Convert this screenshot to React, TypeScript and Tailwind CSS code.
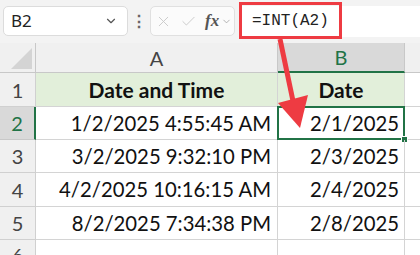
import { Check, ChevronDown, X } from 'lucide-react'

const rows = [
  { n: 2, a: '1/2/2025 4:55:45 AM', b: '2/1/2025', h: 'h-[33px]' },
  { n: 3, a: '3/2/2025 9:32:10 PM', b: '2/3/2025', h: 'h-[33px]' },
  { n: 4, a: '4/2/2025 10:16:15 AM', b: '2/4/2025', h: 'h-[34px]' },
  { n: 5, a: '8/2/2025 7:34:38 PM', b: '2/8/2025', h: 'h-[33px]' },
]

const font = "font-['Lato','Liberation_Sans',sans-serif]"

export default function App() {
  return (
    <div className={`relative h-[255px] w-[420px] overflow-hidden bg-white ${font}`}>
      {/* formula bar */}
      <div className="flex h-[43px] items-start bg-[#f3f3f3] pt-[6px]">
        <div className="ml-[3px] flex h-[30px] w-[125px] items-center justify-between rounded-[5px] border border-[#dcdcdc] bg-white px-[7px]">
          <span className="font-['Noto_Sans',sans-serif] text-[17px] text-[#222]">B2</span>
          <ChevronDown className="mr-[2px] h-[14px] w-[14px] text-[#555]" strokeWidth={2} />
        </div>
        <div className="flex h-[30px] w-[22px] items-center justify-center text-[16px] font-bold text-[#666]">⋮</div>
        <div className="flex h-[30px] w-[85px] items-center gap-[8px] rounded-[5px] border border-[#e0e0e0] bg-[#fbfbfb] pl-[4px]">
          <X className="h-[17px] w-[17px] text-[#c8c8c8]" strokeWidth={1.3} />
          <Check className="h-[17px] w-[17px] text-[#c8c8c8]" strokeWidth={1.3} />
          <span className="flex items-center">
            <span className="font-['Liberation_Serif',serif] text-[17px] font-bold italic text-[#555]">fx</span>
            <ChevronDown className="ml-[2px] h-[11px] w-[11px] text-[#999]" strokeWidth={1.6} />
          </span>
        </div>
        <div className="ml-[4px] flex h-[31px] flex-1 items-center bg-white">
          <div className="-mt-[2px] flex h-[37px] w-[103px] items-center border-[3px] border-[#ee3b42] pl-[10px]">
            <span className="font-['Liberation_Mono',monospace] text-[16px] text-[#222]">=INT(A2)</span>
          </div>
        </div>
      </div>

      {/* sheet */}
      <div className="grid grid-cols-[36px_242px_127px_1fr] text-[#111]">
        {/* column header */}
        <div className="flex h-[30px] items-end justify-end border-r border-b border-[#c8c8c8] bg-[#f0f0f0] pr-[3px] pb-[3px]">
          <svg width="21" height="21" viewBox="0 0 21 21">
            <polygon points="0,21 21,21 21,0" fill="#d4d4d4" />
          </svg>
        </div>
        <div className="flex h-[30px] items-center justify-center border-r border-b border-[#c8c8c8] bg-[#f0f0f0] text-[20px] text-[#444]">A</div>
        <div className="flex h-[30px] items-center justify-center border-r border-b-2 border-r-[#c8c8c8] border-b-[#217346] bg-[#d9d9d9] text-[20px] text-[#217346]">B</div>
        <div className="h-[30px] border-b border-[#c8c8c8] bg-[#f0f0f0]" />

        {/* row 1 */}
        <div className="flex h-[34px] items-center justify-center border-r border-b border-[#d0d0d0] bg-[#f0f0f0] text-[20px] text-[#444]">1</div>
        <div className="flex h-[34px] items-center justify-center border-r border-b border-[#d4d4d4] bg-[#e2efda] text-[21px] font-bold">Date and Time</div>
        <div className="flex h-[34px] items-center justify-center border-r border-b border-[#d4d4d4] bg-[#e2efda] text-[21px] font-bold">Date</div>
        <div className="h-[34px] border-b border-[#d4d4d4]" />

        {rows.map(r => (
          <div key={r.n} className="contents">
            <div
              className={`flex ${r.h} items-center justify-center border-b text-[20px] ${
                r.n === 2
                  ? 'border-r-2 border-r-[#217346] border-b-[#c8c8c8] bg-[#d9d9d9] text-[#217346]'
                  : 'border-r border-[#d0d0d0] bg-[#f0f0f0] text-[#444]'
              }`}
            >
              {r.n}
            </div>
            <div className={`flex ${r.h} items-center justify-end border-r border-b border-[#d4d4d4] pr-[6px] text-[20.3px]`}>{r.a}</div>
            <div className={`relative flex ${r.h} items-center justify-end border-r border-b border-[#d4d4d4] pr-[5px] text-[20.3px]`}>
              {r.n === 2 && (
                <>
                  <div className="absolute -top-[1px] -left-[1px] h-[34px] w-[128px] border-2 border-[#217346]" />
                  <div className="absolute -right-[4px] -bottom-[4px] h-[7px] w-[7px] border border-white bg-[#217346]" />
                </>
              )}
              <span className="relative">{r.b}</span>
            </div>
            <div className={`${r.h} border-b border-[#d4d4d4]`} />
          </div>
        ))}

        {/* row 6, cut by the window */}
        <div className="flex h-[30px] items-start justify-center border-r border-[#d0d0d0] bg-[#f0f0f0] pt-[5px] text-[20px] leading-none text-[#444]">6</div>
        <div className="h-[30px] border-r border-[#d4d4d4]" />
        <div className="h-[30px] border-r border-[#d4d4d4]" />
        <div className="h-[30px]" />
      </div>

      {/* annotation arrow */}
      <svg className="pointer-events-none absolute top-0 left-0" width="420" height="255" viewBox="0 0 420 255">
        <line x1="280" y1="39" x2="293" y2="101" stroke="#ee3b42" strokeWidth="5" />
        <polygon points="278,103 308,95 300,128" fill="#ee3b42" />
      </svg>
    </div>
  )
}
